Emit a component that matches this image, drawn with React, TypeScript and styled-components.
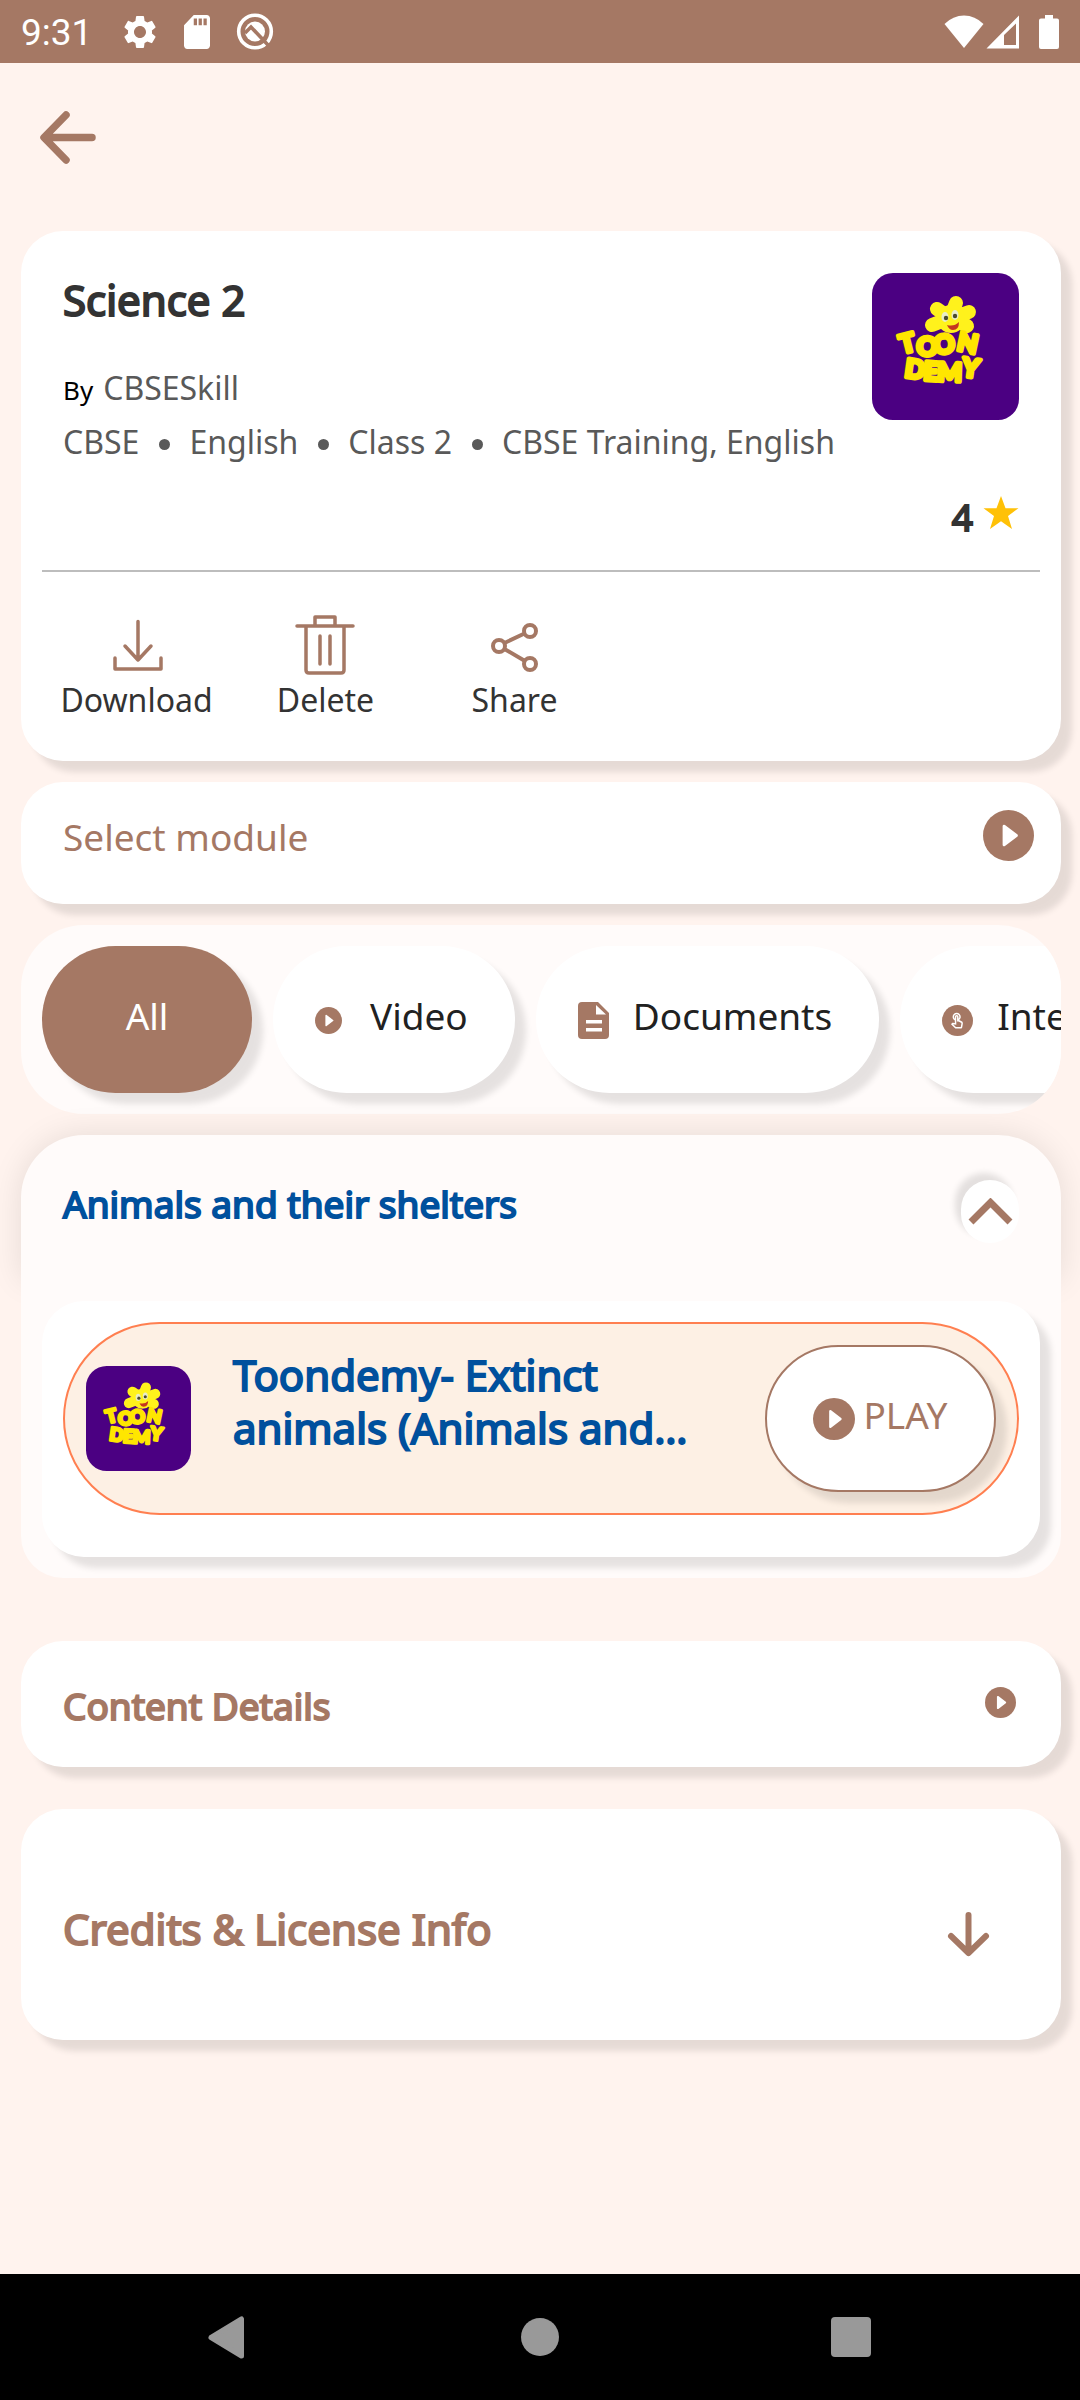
import React from 'react';
import styled, { createGlobalStyle } from 'styled-components';
import { MdSettings, MdSdCard, MdOutlineTouchApp } from 'react-icons/md';

const color = {
  brown: '#a57864',
  page: '#fff3ee',
  panel: '#fffbfa',
  ink: '#333333',
  muted: '#595959',
  blue: '#00509d',
};
const softShadow = '11px 11px 6px rgba(0, 0, 0, 0.1)';

const GlobalStyle = createGlobalStyle`
  * { box-sizing: border-box; }
  body { margin: 0; background: ${color.page}; }
  button { border: 0; margin: 0; padding: 0; background: none; font: inherit; color: inherit; cursor: pointer; }
  svg { display: block; flex-shrink: 0; }
  h1, h2, h3, p { margin: 0; }
`;

const Screen = styled.div`
  min-height: 100vh;
  display: flex;
  flex-direction: column;
  background: ${color.page};
  font-family: 'Noto Sans', sans-serif;
  font-size: 37px;
  line-height: 54px;
  color: ${color.ink};
`;

const StatusBar = styled.div`
  display: flex;
  align-items: center;
  justify-content: space-between;
  height: 63px;
  padding: 0 19px 0 21px;
  background: ${color.brown};
  color: #fff;
`;
const StatusGroup = styled.div<{ $gap: number }>`
  display: flex;
  align-items: center;
  gap: ${(p) => p.$gap}px;
`;
const Clock = styled.time`
  font-family: Roboto, sans-serif;
  font-size: 37px;
  line-height: 42px;
  padding: 3px 4px 0 0;
`;

const TopBar = styled.header`
  padding: 47px 40px 67px;
`;
const BackButton = styled.button`
  display: block;
`;

const Content = styled.main`
  flex: 1;
  display: flex;
  flex-direction: column;
  padding: 0 19px 42px 21px;
`;

const Card = styled.section`
  background: #fff;
  border-radius: 42px;
  box-shadow: ${softShadow};
`;

const CourseCard = styled(Card)`
  padding: 42px 42px 37px;
`;
const CourseTop = styled.div`
  display: flex;
  justify-content: space-between;
`;
const CourseText = styled.div`
  white-space: nowrap;
`;
const Heading = styled.h2<{ $size: number; $tone: string; $line?: number }>`
  font-size: ${(p) => p.$size}px;
  line-height: ${(p) => p.$line ?? 54}px;
  font-weight: 400;
  color: ${(p) => p.$tone};
  -webkit-text-stroke: 2px ${(p) => p.$tone};
`;
const Byline = styled.p`
  display: flex;
  align-items: baseline;
  gap: 10px;
  margin-top: 34px;
  font-size: 32px;
  color: ${color.muted};
`;
const By = styled.span`
  font-size: 26px;
  line-height: 42px;
  color: #000;
`;
const MetaList = styled.ul`
  display: flex;
  align-items: center;
  margin: 0;
  padding: 0;
  list-style: none;
  font-size: 32px;
  color: ${color.muted};
`;
const MetaItem = styled.li`
  display: flex;
  align-items: center;
  & + &::before {
    content: '';
    width: 11px;
    height: 11px;
    margin: 4px 19px 0 20px;
    border-radius: 50%;
    background: ${color.muted};
  }
`;
const Rating = styled.div`
  display: flex;
  justify-content: flex-end;
  gap: 10px;
  margin-top: 21px;
`;
const Divider = styled.hr`
  height: 2px;
  margin: 26px -21px 41px;
  border: 0;
  background: #bdbdbd;
`;
const Actions = styled.div`
  display: grid;
  grid-template-columns: repeat(3, 147px);
  gap: 42px;
`;
const ActionButton = styled.button`
  display: flex;
  flex-direction: column;
  align-items: center;
  font-size: 32px;
  line-height: 48px;
  white-space: nowrap;
`;

const RowButton = styled.button<{ $pad: string; $gapTop: number }>`
  display: flex;
  justify-content: space-between;
  align-items: flex-start;
  width: 100%;
  margin-top: ${(p) => p.$gapTop}px;
  padding: ${(p) => p.$pad};
  background: #fff;
  border-radius: 42px;
  box-shadow: ${softShadow};
  color: ${color.brown};
  text-align: left;
`;

const Filters = styled.div`
  display: flex;
  gap: 21px;
  margin-top: 21px;
  padding: 21px;
  border-radius: 63px;
  background: ${color.panel};
  overflow: hidden;
`;
const Chip = styled.button<{ $active?: boolean }>`
  flex-shrink: 0;
  display: flex;
  align-items: center;
  justify-content: ${(p) => (p.$active ? 'center' : 'flex-start')};
  min-width: 210px;
  height: 147px;
  padding: ${(p) => (p.$active ? '0 42px' : '0 47px 0 42px')};
  border-radius: 74px;
  background: ${(p) => (p.$active ? color.brown : '#fff')};
  color: ${(p) => (p.$active ? '#fff' : '#212121')};
  box-shadow: ${softShadow};
`;
const ChipIcon = styled.span`
  width: 55px;
  padding-top: 2px;
`;
const PillLabel = styled.span`
  padding-bottom: 8px;
`;

const Unit = styled.section`
  margin-top: 21px;
`;
const UnitHeader = styled.div`
  display: flex;
  justify-content: space-between;
  align-items: flex-start;
  padding: 45px 42px 37px;
  background: ${color.panel};
  border-radius: 63px 63px 0 0;
  box-shadow: 0 0 32px rgba(0, 0, 0, 0.1);
`;
const CollapseButton = styled.button`
  display: grid;
  place-items: center;
  width: 58px;
  height: 63px;
  border-radius: 32px;
  background: #fff;
  box-shadow: -6px -7px 6px rgba(0, 0, 0, 0.11);
`;
const UnitBody = styled.div`
  position: relative;
  padding: 21px;
  background: ${color.panel};
  border-radius: 0 0 42px 42px;
`;
const UnitCard = styled(Card)`
  padding: 21px 21px 42px;
`;
const Lesson = styled.article`
  display: flex;
  align-items: center;
  padding: 21px;
  border: 2px solid #ff7f50;
  border-radius: 97px;
  background: #fdf0e4;
`;
const LessonTitle = styled(Heading)`
  flex: 1;
  align-self: flex-start;
  margin: 3px 21px 0 42px;
`;
const PlayButton = styled.button`
  display: flex;
  align-items: center;
  justify-content: center;
  gap: 8px;
  width: 231px;
  height: 147px;
  border: 2px solid ${color.brown};
  border-radius: 74px;
  background: #fff;
  color: ${color.brown};
  box-shadow: ${softShadow};
`;

const NavBar = styled.nav`
  display: flex;
  justify-content: center;
  align-items: center;
  gap: 230px;
  height: 126px;
  background: #000;
  color: #999;
`;
const NavButton = styled.button`
  display: grid;
  place-items: center;
  width: 81px;
  height: 81px;
`;

const LogoLetters = styled.text`
  font-family: Lato, sans-serif;
  font-weight: 900;
  font-size: 26px;
  fill: #ffe600;
  stroke: #ffe600;
  stroke-width: 4px;
  stroke-linejoin: round;
`;

function ToonLogo({ size }: { size: number }) {
  return (
    <svg width={size} height={size} viewBox="0 0 147 147" role="img" aria-label="Toondemy">
      <rect width="147" height="147" rx={size > 120 ? 21 : 29} fill="#4b0082" />
      <path
        d="M78 45 L65 36 M78 45 L84 30 M80 45 L97 39 M78 45 L60 52 M80 45 L95 53"
        fill="none"
        stroke="#fff21c"
        strokeWidth="14"
        strokeLinecap="round"
      />
      <circle cx="79" cy="46" r="14" fill="#fff21c" />
      <ellipse cx="73" cy="44" rx="3.500" ry="5" fill="#e8ecc8" />
      <ellipse cx="83" cy="42" rx="3.500" ry="5" fill="#e8ecc8" />
      <circle cx="74" cy="45" r="2.200" fill="#4a4a30" />
      <circle cx="83" cy="43" r="2.200" fill="#4a4a30" />
      <path d="M75 52 Q82 54 87 49 Q87 57 81 57 Q77 57 75 52 Z" fill="#c5361f" />
      <LogoLetters
        x="30 44 62 84 100 32 51 65 89"
        y="81 82 81 77 90 104 107 108 103"
        rotate="-14 4 -3 12 0 8 4 2 8"
      >
        TOON DEMY
      </LogoLetters>
    </svg>
  );
}

function PlayCircle({ size }: { size: number }) {
  return (
    <svg width={size} height={size} viewBox="0 0 52 52">
      <circle cx="26" cy="26" r="26" fill={color.brown} />
      <path d="M21.5 16.5 L34 26 L21.5 35.5 Z" fill="#fff" stroke="#fff" strokeWidth="3" strokeLinejoin="round" />
    </svg>
  );
}

const StatusIcons = () => (
  <StatusGroup $gap={2}>
    <svg width="40" height="34" viewBox="0 0 40 34">
      <path d="M0.5 9 Q9 0.5 20 0.5 Q31 0.5 39.5 9 L20 33 Z" fill="#fff" />
    </svg>
    <svg width="34" height="34" viewBox="0 0 34 34">
      <path fillRule="evenodd" d="M0.5 33.5 L33 0.5 V33.5 Z M18 20 V30 H30 V8.5 Z" fill="#fff" />
    </svg>
    <svg width="39" height="34" viewBox="-17 0 39 34">
      <path d="M6 0 H14 V3.500 H18 Q20 3.500 20 5.500 V32 Q20 34 18 34 H2 Q0 34 0 32 V5.500 Q0 3.500 2 3.500 H6 Z" fill="#fff" />
    </svg>
  </StatusGroup>
);

const DownloadIcon = () => (
  <svg width="63" height="63" viewBox="0 0 63 63" fill="none" stroke={color.brown} strokeWidth="3.500" strokeLinecap="round" strokeLinejoin="round">
    <path d="M33 8.500 V47 M20 33 L33 47 L46 33 M10 45 V56 H56 V45" />
  </svg>
);
const TrashIcon = () => (
  <svg width="63" height="63" viewBox="0 0 63 63" fill="none" stroke={color.brown} strokeWidth="3.500" strokeLinecap="round" strokeLinejoin="round">
    <path d="M3 13 H59 M21 13 V4 H41 V13 M12 13 V57 Q12 60 15 60 H47 Q50 60 50 57 V13 M26 23 V51 M36 23 V51" />
  </svg>
);
const ShareIcon = () => (
  <svg width="63" height="63" viewBox="0 0 63 63" fill="none" stroke={color.brown} strokeWidth="4">
    <circle cx="16" cy="33" r="6" />
    <circle cx="47" cy="18" r="6" />
    <circle cx="47" cy="51" r="6" />
    <path d="M21.500 30 L41.500 20.500 M21.500 36 L42 48" />
  </svg>
);

export default function App() {
  return (
    <Screen>
      <GlobalStyle />
      <StatusBar>
        <StatusGroup $gap={24}>
          <Clock>9:31</Clock>
          <MdSettings size={40} />
          <svg width="26" height="34" viewBox="4 2 16 20" preserveAspectRatio="none">
            <MdSdCard size={24} />
          </svg>
          <svg width="42" height="37" viewBox="-3 0 42 37">
            <circle cx="18" cy="18.500" r="16.300" fill="none" stroke="#fff" strokeWidth="3.600" />
            <circle cx="18" cy="18.500" r="10" fill="#fff" />
            <path d="M8 20 L14 14 L31 32" fill="none" stroke={color.brown} strokeWidth="3.600" />
          </svg>
        </StatusGroup>
        <StatusIcons />
      </StatusBar>

      <TopBar>
        <BackButton aria-label="Back">
          <svg width="56" height="54" viewBox="0 0 56 54" fill="none" stroke={color.brown} strokeWidth="7.500" strokeLinecap="round" strokeLinejoin="round">
            <path d="M26 5 L4 27.500 L26 50 M5 27.500 H52" />
          </svg>
        </BackButton>
      </TopBar>

      <Content>
        <CourseCard>
          <CourseTop>
            <CourseText>
              <Heading as="h1" $size={42} $tone={color.ink}>Science 2</Heading>
              <Byline><By>By</By>CBSESkill</Byline>
              <MetaList>
                <MetaItem>CBSE</MetaItem>
                <MetaItem>English</MetaItem>
                <MetaItem>Class 2</MetaItem>
                <MetaItem>CBSE Training, English</MetaItem>
              </MetaList>
            </CourseText>
            <ToonLogo size={147} />
          </CourseTop>
          <Rating>
            <Heading as="span" $size={37} $tone={color.ink}>4</Heading>
            <svg width="36" height="42" viewBox="0 0 36 42">
              <path d="M18 6 L22.500 18.200 H35.500 L25 26 L29 39 L18 31.200 L7 39 L11 26 L0.500 18.200 H13.500 Z" fill="#ffc107" />
            </svg>
          </Rating>
          <Divider />
          <Actions>
            <ActionButton><DownloadIcon />Download</ActionButton>
            <ActionButton><TrashIcon />Delete</ActionButton>
            <ActionButton><ShareIcon />Share</ActionButton>
          </Actions>
        </CourseCard>

        <RowButton $gapTop={21} $pad="28px 27px 40px 42px">
          Select module
          <PlayCircle size={51} />
        </RowButton>

        <Filters>
          <Chip $active><PillLabel>All</PillLabel></Chip>
          <Chip>
            <ChipIcon><PlayCircle size={27} /></ChipIcon>
            <PillLabel>Video</PillLabel>
          </Chip>
          <Chip>
            <ChipIcon>
              <svg width="31" height="37" viewBox="0 0 31 37">
                <path d="M4 0 H20 L31 11 V33 Q31 37 27 37 H4 Q0 37 0 33 V4 Q0 0 4 0 Z" fill={color.brown} />
                <path d="M18 3 V12.500 H28 Z M8 18 H24 V21.500 H8 Z M8 26 H24 V29.500 H8 Z" fill="#fff" />
              </svg>
            </ChipIcon>
            <PillLabel>Documents</PillLabel>
          </Chip>
          <Chip>
            <ChipIcon>
              <svg width="31" height="31" viewBox="0 0 31 31">
                <circle cx="15.500" cy="15.500" r="15.500" fill={color.brown} />
                <MdOutlineTouchApp x="6" y="7" size={18} color="#fff" />
              </svg>
            </ChipIcon>
            <PillLabel>Interactive</PillLabel>
          </Chip>
        </Filters>

        <Unit>
          <UnitHeader>
            <Heading $size={37} $line={48} $tone={color.blue}>Animals and their shelters</Heading>
            <CollapseButton aria-label="Collapse">
              <svg width="45" height="28" viewBox="0 0 45 28">
                <path d="M3 24 L22.500 4.500 L42 24" fill="none" stroke={color.brown} strokeWidth="7" />
              </svg>
            </CollapseButton>
          </UnitHeader>
          <UnitBody>
            <UnitCard as="div">
              <Lesson>
                <ToonLogo size={105} />
                <LessonTitle as="h3" $size={42} $line={53} $tone={color.blue}>
                  Toondemy- Extinct animals (Animals and…
                </LessonTitle>
                <PlayButton>
                  <PlayCircle size={42} />
                  <PillLabel>PLAY</PillLabel>
                </PlayButton>
              </Lesson>
            </UnitCard>
          </UnitBody>
        </Unit>

        <RowButton $gapTop={63} $pad="38px 39px 34px 42px">
          <Heading as="span" $size={37} $tone={color.brown}>Content Details</Heading>
          <svg width="42" height="42" viewBox="0 0 42 42">
            <g transform="translate(5 8)"><PlayCircle size={31} /></g>
          </svg>
        </RowButton>

        <RowButton $gapTop={42} $pad="93px 61px 75px 42px">
          <Heading as="span" $size={42} $tone={color.brown}>Credits &amp; License Info</Heading>
          <svg width="63" height="63" viewBox="0 0 63 63" fill="none" stroke={color.brown} strokeWidth="6" strokeLinecap="round" strokeLinejoin="round">
            <path d="M31.500 13 V50 M14 34 L31.500 51 L49 34" />
          </svg>
        </RowButton>
      </Content>

      <NavBar aria-label="System">
        <NavButton aria-label="Back">
          <svg width="81" height="81" viewBox="0 0 81 81"><path d="M22 40.500 L52.500 22 V59 Z" fill="currentColor" stroke="currentColor" strokeWidth="5" strokeLinejoin="round" /></svg>
        </NavButton>
        <NavButton aria-label="Home">
          <svg width="38" height="38" viewBox="0 0 38 38"><circle cx="19" cy="19" r="19" fill="currentColor" /></svg>
        </NavButton>
        <NavButton aria-label="Recent apps">
          <svg width="40" height="40" viewBox="0 0 40 40"><rect width="40" height="40" rx="4" fill="currentColor" /></svg>
        </NavButton>
      </NavBar>
    </Screen>
  );
}
